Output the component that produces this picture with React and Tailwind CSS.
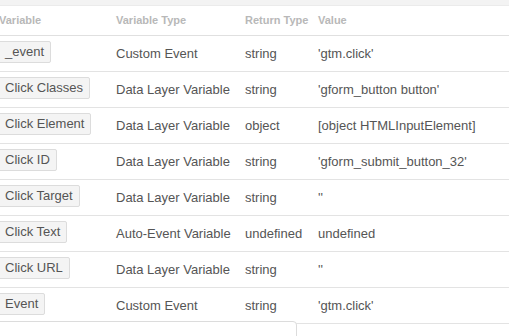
import React from 'react';

const rows = [
    { name: '_event', type: 'Custom Event', ret: 'string', value: "'gtm.click'" },
    { name: 'Click Classes', type: 'Data Layer Variable', ret: 'string', value: "'gform_button button'" },
    { name: 'Click Element', type: 'Data Layer Variable', ret: 'object', value: '[object HTMLInputElement]' },
    { name: 'Click ID', type: 'Data Layer Variable', ret: 'string', value: "'gform_submit_button_32'" },
    { name: 'Click Target', type: 'Data Layer Variable', ret: 'string', value: "''" },
    { name: 'Click Text', type: 'Auto-Event Variable', ret: 'undefined', value: 'undefined' },
    { name: 'Click URL', type: 'Data Layer Variable', ret: 'string', value: "''" },
    { name: 'Event', type: 'Custom Event', ret: 'string', value: "'gtm.click'" },
];

const App = () => {
    return (
        <div className="relative w-[509px] h-[336px] overflow-hidden bg-white font-['Liberation_Sans',Arial,sans-serif]">
            <div className="h-[6px] bg-[#f3f3f3] border-b border-[#ebebeb]"></div>

            {/* header */}
            <div className="grid grid-cols-[116px_129px_73px_1fr] h-[30px] items-center border-b border-[#e0e0e0] text-[11px] font-bold text-[#b8b8b8]">
                <div className="ml-[-1px]">Variable</div>
                <div>Variable Type</div>
                <div>Return Type</div>
                <div>Value</div>
            </div>

            {rows.map((r) => (
                <div key={r.name} className="grid grid-cols-[116px_129px_73px_1fr] h-[36px] items-center border-b border-[#e3e3e3] text-[13px] text-[#555]">
                    <div className="flex mb-[3px]">
                        <span className="ml-[-2px] h-[22px] leading-[19px] px-[6px] bg-[#f4f4f4] border border-[#dcdcdc] rounded-[2px] text-[#555]">
                            {r.name}
                        </span>
                    </div>
                    <div>{r.type}</div>
                    <div>{r.ret}</div>
                    <div className="whitespace-nowrap">{r.value}</div>
                </div>
            ))}

            {/* tab peeking in at the bottom */}
            <div className="absolute left-[-1px] top-[321px] w-[298px] h-[30px] bg-white border border-[#dcdcdc] rounded-tr-[4px]"></div>
        </div>
    );
};

export default App;
